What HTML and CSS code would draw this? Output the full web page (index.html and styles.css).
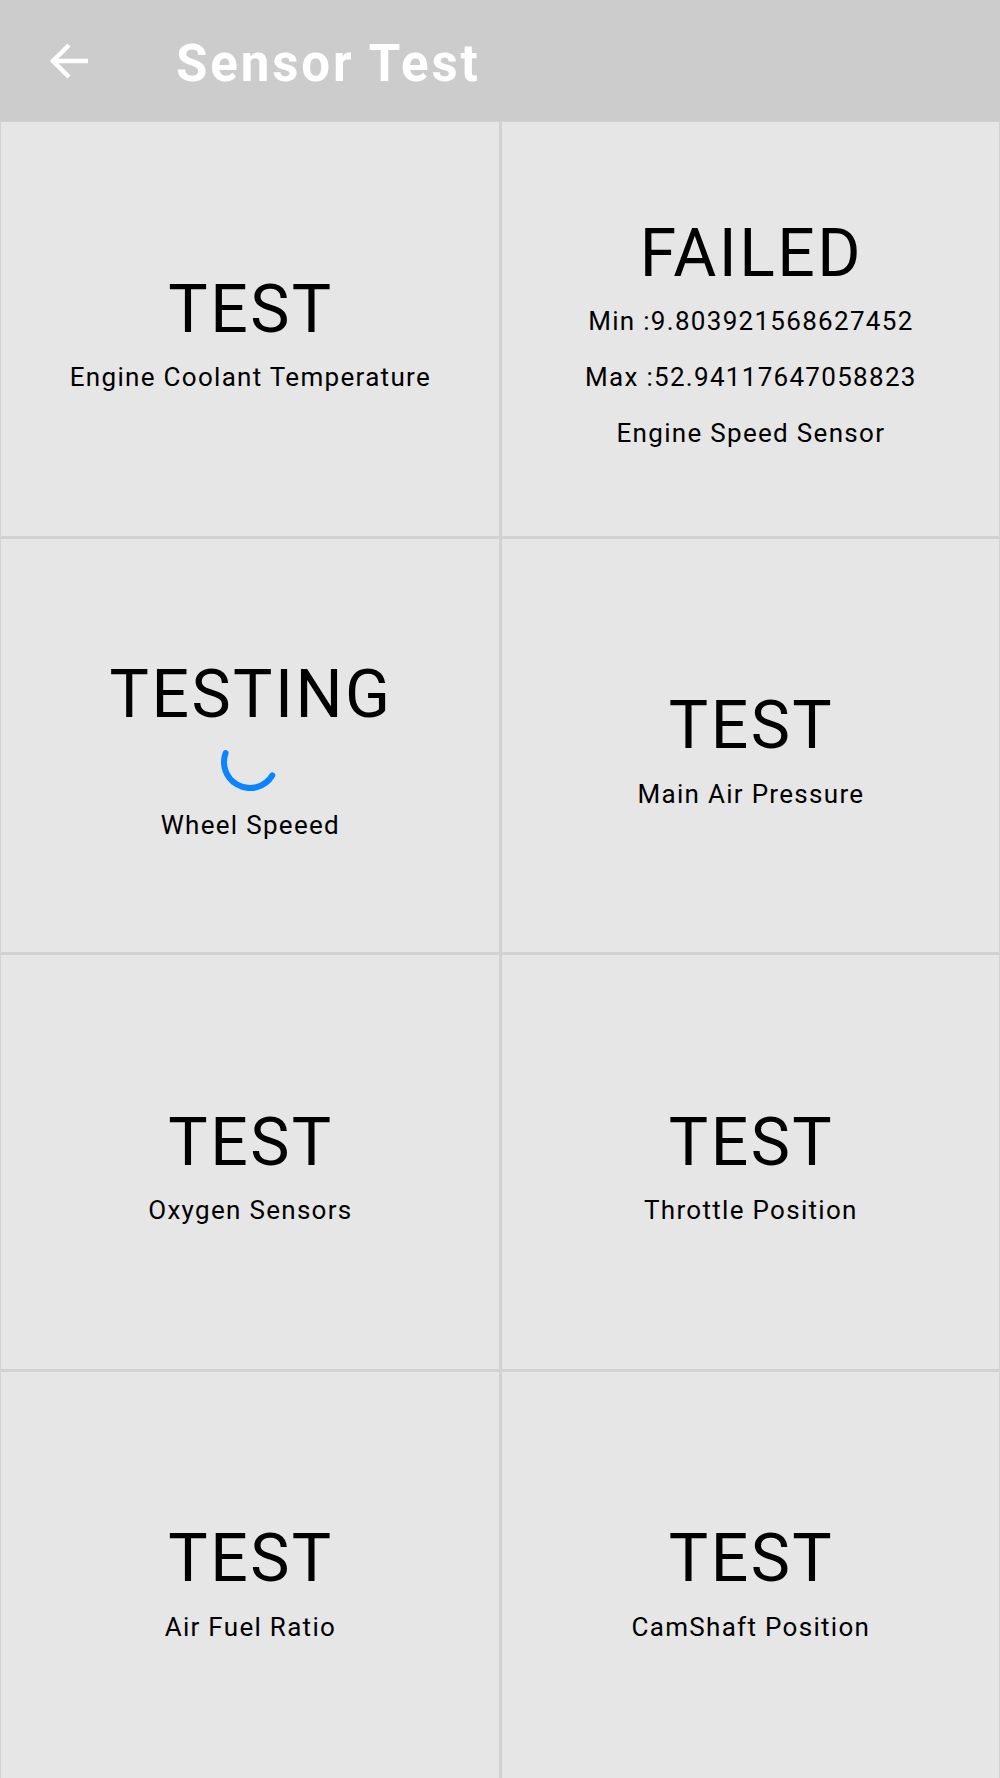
FILE: index.html
```html
<!DOCTYPE html>
<html lang="en">
<head>
    <meta charset="UTF-8">
    <meta name="viewport" content="width=device-width, initial-scale=1.0">
    <link rel="stylesheet" href="styles.css">
    <title>Sensor Test</title>
</head>
<body>
    <!-- top bar -->
    <div class="bar">
        <svg class="back" viewBox="0 0 40 36"><path d="M40 18H5M21 2L5 18L21 34"/></svg>
        <div class="ttl">Sensor Test</div>
    </div>
    <!-- sensor grid -->
    <div class="grd">
        <div class="cel">
            <p class="big">TEST</p>
            <p class="nm">Engine Coolant Temperature</p>
        </div>
        <div class="cel">
            <p class="big">FAILED</p>
            <p class="nm">Min :9.803921568627452</p>
            <p class="nm gap">Max :52.94117647058823</p>
            <p class="nm gap">Engine Speed Sensor</p>
        </div>
        <div class="cel">
            <p class="big">TESTING</p>
            <svg class="spn" viewBox="0 0 58 58"><circle cx="29" cy="29" r="26" transform="rotate(31 29 29)"/></svg>
            <p class="nm aft">Wheel Speeed</p>
        </div>
        <div class="cel">
            <p class="big">TEST</p>
            <p class="nm">Main Air Pressure</p>
        </div>
        <div class="cel">
            <p class="big">TEST</p>
            <p class="nm">Oxygen Sensors</p>
        </div>
        <div class="cel">
            <p class="big">TEST</p>
            <p class="nm">Throttle Position</p>
        </div>
        <div class="cel">
            <p class="big">TEST</p>
            <p class="nm">Air Fuel Ratio</p>
        </div>
        <div class="cel">
            <p class="big">TEST</p>
            <p class="nm">CamShaft Position</p>
        </div>
    </div>
</body>
</html>
```
FILE: styles.css
```css
*{
    margin: 0;
    padding: 0;
    box-sizing: border-box;
}
body{
    height: 100vh;
    width: 100%;
    overflow: hidden;
    font-family: Roboto, "Noto Sans", sans-serif;
    background-color: #d2d2d2;
}
.bar{
    height: 121px;
    background-color: #cccccc;
    display: flex;
    align-items: center;
}
.back{
    width: 40px;
    height: 36px;
    margin-left: 48px;
    fill: none;
    stroke: #ffffff;
    stroke-width: 4.5;
}
.ttl{
    margin-left: 88px;
    margin-top: 6px;
    font-size: 51px;
    font-weight: bold;
    letter-spacing: 2.9px;
    color: #ffffff;
}
.grd{
    display: grid;
    grid-template-columns: 1fr 1fr;
    grid-auto-rows: 413.5px;
    gap: 3px;
    padding: 1px;
    background-color: #d2d2d2;
}
.cel{
    background-color: #e6e6e6;
    display: flex;
    flex-direction: column;
    align-items: center;
    justify-content: center;
    padding-top: 6px;
    color: #000000;
}
.big{
    font-size: 66px;
    line-height: 1.172;
    letter-spacing: 2.5px;
    text-indent: 2.5px;
}
.nm{
    font-size: 26px;
    line-height: 1.172;
    letter-spacing: 1.3px;
    text-indent: 1.3px;
    margin-top: 14px;
}
.gap{
    margin-top: 25.5px;
}
.aft{
    margin-top: 19.5px;
}
.spn{
    width: 58px;
    height: 58px;
}
.spn circle{
    fill: none;
    stroke: #0a84ff;
    stroke-width: 6;
    stroke-linecap: round;
    stroke-dasharray: 76 200;
}
```
